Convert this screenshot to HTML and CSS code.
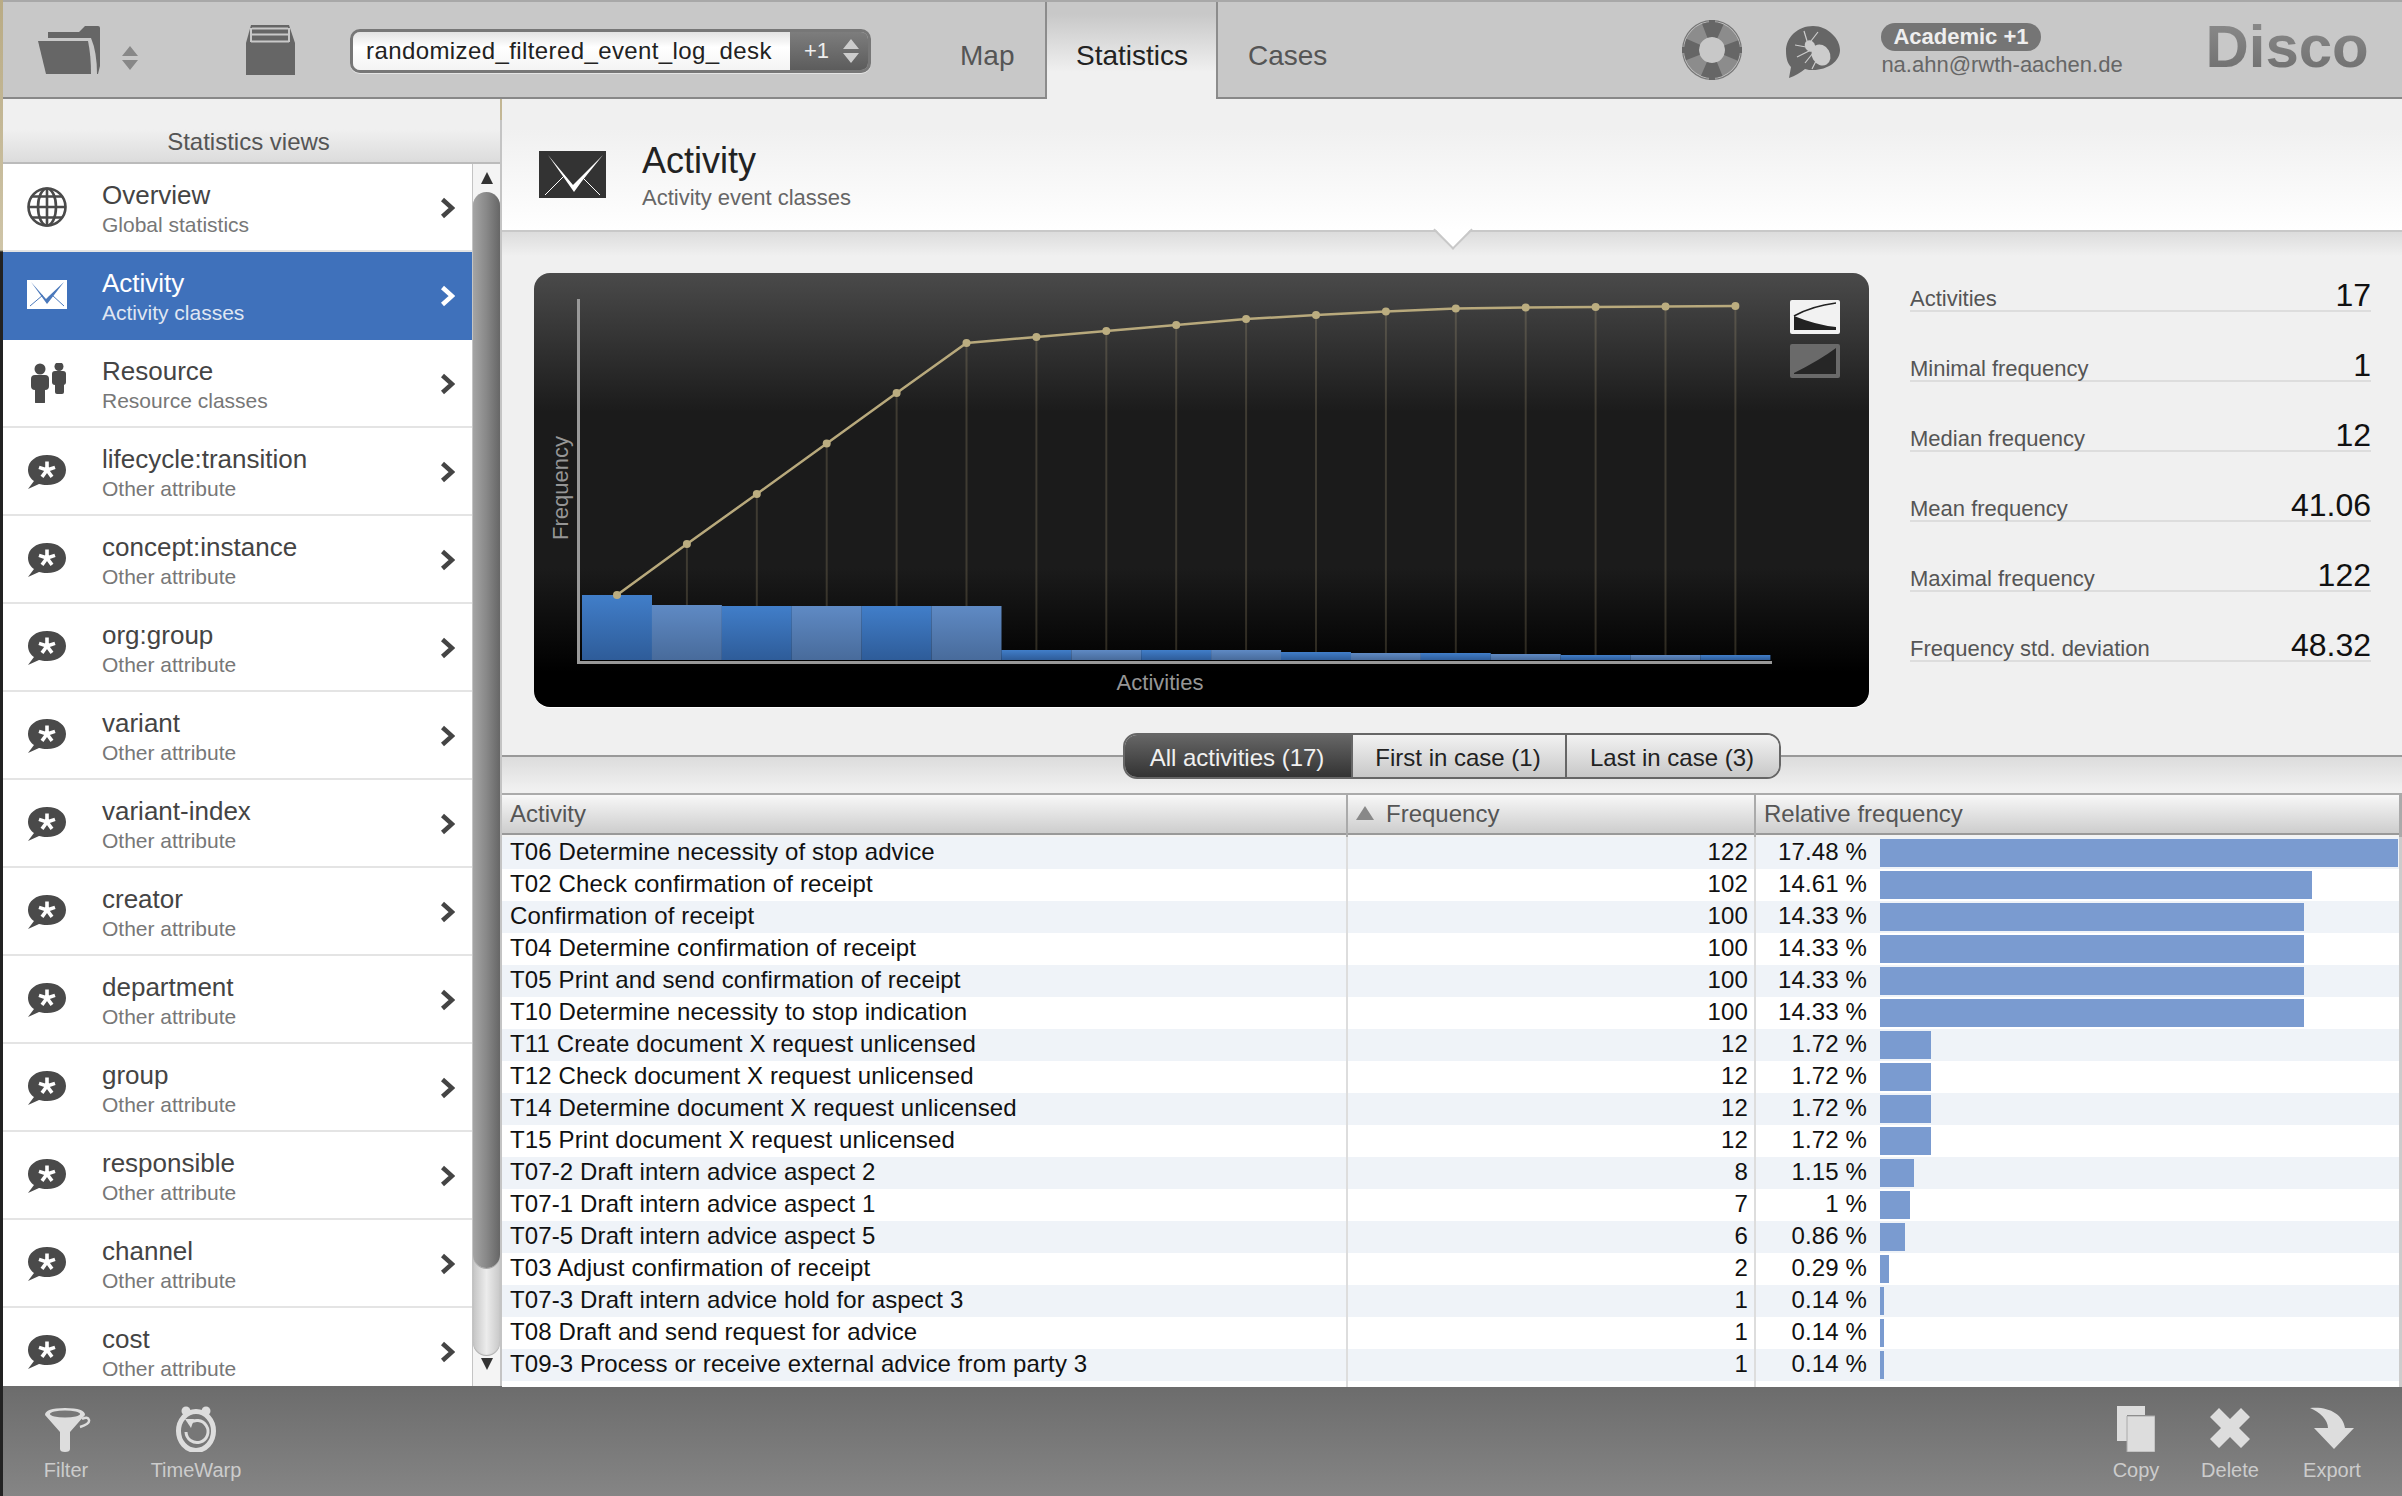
FILE: index.html
```html
<!DOCTYPE html>
<html lang="en">
<head>
  <meta charset="UTF-8" />
  <title>Disco - Statistics</title>
  <link rel="stylesheet" href="styles.css">
</head>
<body>
  <svg class="defs">
    <symbol id="i-attr" viewBox="0 0 40 40">
      <path d="M20 4C9 4 1 10 1 19c0 5 3 9 6 11l-6 8 11-5c2 .5 5 1 8 1 11 0 19-6 19-15S31 4 20 4z" fill="#4a4a4a"/>
      <path d="M20 19V10.500M20 19l8-2.600M20 19l5 6.900M20 19l-5 6.900M20 19l-8-2.600" stroke="#fff" stroke-width="3.600"/>
    </symbol>
    <symbol id="i-chev" viewBox="0 0 15 22">
      <path d="M2.5 2.5L12 11l-9.500 8.500" fill="none" stroke="currentColor" stroke-width="4.500"/>
    </symbol>
  </svg>

  <div class="app">
    <header class="topbar">
      <svg class="ico-folder" width="62" height="48" viewBox="0 0 62 48">
        <path d="M10 6h31l6-6h13q2 0 2 2v38l-2 8h-1q0-22-6-36H10z" fill="#666"/>
        <path d="M0 15h50q3 14 3 33H8z" fill="#666"/>
      </svg>
      <svg class="ico-updown" width="16" height="24" viewBox="0 0 16 24">
        <path d="M8 0l8 10H0zM0 14h16L8 24z" fill="#888"/>
      </svg>
      <svg class="ico-archive" width="50" height="50" viewBox="0 0 50 50">
        <path d="M6 0h38l6 18v32H1V18z" fill="#666"/>
        <path d="M7 3.500h36M6 9.500h38M6 16.500h38M6 3v14M44 3v14" stroke="#c8c8c8" stroke-width="2" fill="none"/>
      </svg>

      <div class="combo">
        <span class="combo-name">randomized_filtered_event_log_desk</span>
        <span class="combo-count">+1
          <svg width="16" height="24" viewBox="0 0 16 24"><path d="M8 0l8 10H0zM0 14h16L8 24z" fill="#ccc"/></svg>
        </span>
      </div>

      <nav class="tabs">
        <a class="tab tab-map">Map</a>
        <a class="tab tab-active">Statistics</a>
        <a class="tab tab-cases">Cases</a>
      </nav>

      <svg class="ico-help" width="60" height="60" viewBox="0 0 60 60">
        <circle cx="30" cy="30" r="29.300" fill="none" stroke="#777" stroke-width="1.200"/>
        <circle cx="30" cy="30" r="20.500" fill="none" stroke="#8c8c8c" stroke-width="15"/>
        <circle cx="30" cy="30" r="20.500" fill="none" stroke="#666" stroke-width="15" stroke-dasharray="16.100 16.100" stroke-dashoffset="8.050"/>
        <path d="M27 0h6v6h-6zM27 54h6v6h-6zM0 27h6v6H0zM54 27h6v6h-6z" fill="#666"/>
      </svg>
      <svg class="ico-bug" width="56" height="54" viewBox="0 0 56 54">
        <path d="M28 1C13 1 1 12 1 26c0 8 2 13 5 16L4 53c6-2 12-6 16-9 3 1 5 1 8 1 15 0 27-9 27-20S43 1 28 1z" fill="#666"/>
        <ellipse cx="36" cy="30" rx="9" ry="11" transform="rotate(-30 36 30)" fill="#ccc"/>
        <ellipse cx="25" cy="21" rx="5" ry="6" transform="rotate(-30 25 21)" fill="#ccc"/>
        <path d="M22 16L19 6M26 16L33 7M21 22L10 20M24 26L12 32M28 28L20 38M31 36L27 44" stroke="#ccc" stroke-width="1.200" fill="none"/>
      </svg>

      <div class="account">
        <span class="badge">Academic +1</span>
        <span class="email">na.ahn@rwth-aachen.de</span>
      </div>
      <div class="logo">Disco</div>
    </header>

    <div class="content">
      <aside class="sidebar">
        <div class="sidebar-head">Statistics views</div>
        <div class="sidebar-body">
          <ul class="views">
            <li class="view">
              <svg class="view-ico" viewBox="0 0 40 40">
                <g fill="none" stroke="#4a4a4a" stroke-width="2.600">
                  <circle cx="20" cy="20" r="18.500"/><ellipse cx="20" cy="20" rx="9" ry="18.500"/>
                  <path d="M20 1.500v37M1.500 20h37M5 9.500h30M5 30.500h30"/>
                </g>
              </svg>
              <div class="view-text"><div class="view-title">Overview</div><div class="view-sub">Global statistics</div></div>
              <svg class="view-chev"><use href="#i-chev"/></svg>
            </li>
            <li class="view view-active">
              <svg class="view-ico" viewBox="0 0 40 40">
                <rect x="0" y="5" width="41" height="29" fill="#fff"/>
                <path d="M4 7L19 24l3-3 15-14-13 17-4 5z" fill="#4a78bb"/>
                <path d="M3 31l13-11M37 31L25 20" stroke="#4a78bb" stroke-width="1"/>
              </svg>
              <div class="view-text"><div class="view-title">Activity</div><div class="view-sub">Activity classes</div></div>
              <svg class="view-chev"><use href="#i-chev"/></svg>
            </li>
            <li class="view">
              <svg class="view-ico" viewBox="0 0 40 40">
                <g fill="#4a4a4a">
                  <circle cx="13" cy="6" r="5.500"/><rect x="4" y="12" width="18" height="15" rx="4"/><rect x="8" y="20" width="10" height="21" rx="2"/>
                  <circle cx="32" cy="3.500" r="4.500"/><rect x="25" y="8" width="14" height="14" rx="3"/><rect x="28" y="18" width="9" height="13" rx="2"/>
                </g>
              </svg>
              <div class="view-text"><div class="view-title">Resource</div><div class="view-sub">Resource classes</div></div>
              <svg class="view-chev"><use href="#i-chev"/></svg>
            </li>
            <li class="view">
              <svg class="view-ico"><use href="#i-attr"/></svg>
              <div class="view-text"><div class="view-title">lifecycle:transition</div><div class="view-sub">Other attribute</div></div>
              <svg class="view-chev"><use href="#i-chev"/></svg>
            </li>
            <li class="view">
              <svg class="view-ico"><use href="#i-attr"/></svg>
              <div class="view-text"><div class="view-title">concept:instance</div><div class="view-sub">Other attribute</div></div>
              <svg class="view-chev"><use href="#i-chev"/></svg>
            </li>
            <li class="view">
              <svg class="view-ico"><use href="#i-attr"/></svg>
              <div class="view-text"><div class="view-title">org:group</div><div class="view-sub">Other attribute</div></div>
              <svg class="view-chev"><use href="#i-chev"/></svg>
            </li>
            <li class="view">
              <svg class="view-ico"><use href="#i-attr"/></svg>
              <div class="view-text"><div class="view-title">variant</div><div class="view-sub">Other attribute</div></div>
              <svg class="view-chev"><use href="#i-chev"/></svg>
            </li>
            <li class="view">
              <svg class="view-ico"><use href="#i-attr"/></svg>
              <div class="view-text"><div class="view-title">variant-index</div><div class="view-sub">Other attribute</div></div>
              <svg class="view-chev"><use href="#i-chev"/></svg>
            </li>
            <li class="view">
              <svg class="view-ico"><use href="#i-attr"/></svg>
              <div class="view-text"><div class="view-title">creator</div><div class="view-sub">Other attribute</div></div>
              <svg class="view-chev"><use href="#i-chev"/></svg>
            </li>
            <li class="view">
              <svg class="view-ico"><use href="#i-attr"/></svg>
              <div class="view-text"><div class="view-title">department</div><div class="view-sub">Other attribute</div></div>
              <svg class="view-chev"><use href="#i-chev"/></svg>
            </li>
            <li class="view">
              <svg class="view-ico"><use href="#i-attr"/></svg>
              <div class="view-text"><div class="view-title">group</div><div class="view-sub">Other attribute</div></div>
              <svg class="view-chev"><use href="#i-chev"/></svg>
            </li>
            <li class="view">
              <svg class="view-ico"><use href="#i-attr"/></svg>
              <div class="view-text"><div class="view-title">responsible</div><div class="view-sub">Other attribute</div></div>
              <svg class="view-chev"><use href="#i-chev"/></svg>
            </li>
            <li class="view">
              <svg class="view-ico"><use href="#i-attr"/></svg>
              <div class="view-text"><div class="view-title">channel</div><div class="view-sub">Other attribute</div></div>
              <svg class="view-chev"><use href="#i-chev"/></svg>
            </li>
            <li class="view">
              <svg class="view-ico"><use href="#i-attr"/></svg>
              <div class="view-text"><div class="view-title">cost</div><div class="view-sub">Other attribute</div></div>
              <svg class="view-chev"><use href="#i-chev"/></svg>
            </li>
          </ul>
          <div class="scrollbar">
            <div class="scroll-btn scroll-up"></div>
            <div class="scroll-track"><div class="scroll-thumb"></div></div>
            <div class="scroll-btn scroll-down"></div>
          </div>
        </div>
      </aside>

      <main class="main">
        <div class="page-head">
          <svg class="page-ico" width="67" height="47" viewBox="0 0 67 47">
            <rect width="67" height="47" fill="#333"/>
            <path d="M9 4l25 30 8-8L64 4 43 30l-8 11z" fill="#fff"/>
            <path d="M6 44l20-20M61 44L43 26" stroke="#fff" stroke-width="1"/>
          </svg>
          <div class="page-text">
            <div class="page-title">Activity</div>
            <div class="page-sub">Activity event classes</div>
          </div>
          <div class="notch"></div>
        </div>

        <div class="panels">
          <div class="chart">
            <svg width="1335" height="434" viewBox="534 273 1335 434">
              <defs>
                <linearGradient id="bar-a" x1="0" y1="0" x2="0" y2="1"><stop offset="0" stop-color="#417ec9"/><stop offset="1" stop-color="#2e5c99"/></linearGradient>
                <linearGradient id="bar-b" x1="0" y1="0" x2="0" y2="1"><stop offset="0" stop-color="#5f8ac4"/><stop offset="1" stop-color="#486b9b"/></linearGradient>
              </defs>
              <g class="drops">
                <path d="M686.900 544V660M756.800 494V660M826.700 443.500V660M896.600 393V660M966.500 343V660M1036.400 337V660M1106.300 331V660M1176.200 325V660M1246.100 319V660M1316 315V660M1385.900 311.600V660M1455.800 308.600V660M1525.700 307.600V660M1595.600 307V660M1665.500 306.600V660M1735.400 306V660"/>
              </g>
              <g>
                <rect x="582" y="595" width="70" height="65" fill="url(#bar-a)"/>
                <rect x="651.900" y="605" width="70" height="55" fill="url(#bar-b)"/>
                <rect x="721.800" y="606" width="70" height="54" fill="url(#bar-a)"/>
                <rect x="791.700" y="606" width="70" height="54" fill="url(#bar-b)"/>
                <rect x="861.600" y="606" width="70" height="54" fill="url(#bar-a)"/>
                <rect x="931.500" y="606" width="70" height="54" fill="url(#bar-b)"/>
                <rect x="1001.400" y="650" width="70" height="10" fill="url(#bar-a)"/>
                <rect x="1071.300" y="650" width="70" height="10" fill="url(#bar-b)"/>
                <rect x="1141.200" y="650" width="70" height="10" fill="url(#bar-a)"/>
                <rect x="1211.100" y="650" width="70" height="10" fill="url(#bar-b)"/>
                <rect x="1281" y="652" width="70" height="8" fill="url(#bar-a)"/>
                <rect x="1350.900" y="653" width="70" height="7" fill="url(#bar-b)"/>
                <rect x="1420.800" y="653" width="70" height="7" fill="url(#bar-a)"/>
                <rect x="1490.700" y="654" width="70" height="6" fill="url(#bar-b)"/>
                <rect x="1560.600" y="655" width="70" height="5" fill="url(#bar-a)"/>
                <rect x="1630.500" y="655" width="70" height="5" fill="url(#bar-b)"/>
                <rect x="1700.400" y="655" width="70" height="5" fill="url(#bar-a)"/>
              </g>
              <path class="axis" d="M578.500 299V662.500H1772"/>
              <polyline class="curve" points="617,595 686.900,544 756.800,494 826.700,443.500 896.600,393 966.500,343 1036.400,337 1106.300,331 1176.200,325 1246.100,319 1316,315 1385.900,311.600 1455.800,308.600 1525.700,307.600 1595.600,307 1665.500,306.600 1735.400,306"/>
              <g class="dots">
                <circle cx="617" cy="595" r="4"/><circle cx="686.900" cy="544" r="4"/><circle cx="756.800" cy="494" r="4"/><circle cx="826.700" cy="443.500" r="4"/><circle cx="896.600" cy="393" r="4"/><circle cx="966.500" cy="343" r="4"/><circle cx="1036.400" cy="337" r="4"/><circle cx="1106.300" cy="331" r="4"/><circle cx="1176.200" cy="325" r="4"/><circle cx="1246.100" cy="319" r="4"/><circle cx="1316" cy="315" r="4"/><circle cx="1385.900" cy="311.600" r="4"/><circle cx="1455.800" cy="308.600" r="4"/><circle cx="1525.700" cy="307.600" r="4"/><circle cx="1595.600" cy="307" r="4"/><circle cx="1665.500" cy="306.600" r="4"/><circle cx="1735.400" cy="306" r="4"/>
              </g>
              <text class="axis-label" x="568" y="488" transform="rotate(-90 568 488)" text-anchor="middle">Frequency</text>
              <text class="axis-label" x="1160" y="690" text-anchor="middle">Activities</text>
              <rect x="1790" y="300" width="50" height="34" rx="2" fill="#f2f2f2"/>
              <path d="M1794 316Q1812 306 1836 303" fill="none" stroke="#222" stroke-width="1.500"/>
              <path d="M1794 316Q1816 325 1836 327V330H1794z" fill="#222"/>
              <rect x="1790" y="344" width="50" height="34" rx="2" fill="#6a6a6a"/>
              <path d="M1794 373Q1820 360 1836 348V374H1794z" fill="#262626"/>
            </svg>
          </div>

          <dl class="stats">
            <div class="stat"><dt>Activities</dt><dd>17</dd></div>
            <div class="stat"><dt>Minimal frequency</dt><dd>1</dd></div>
            <div class="stat"><dt>Median frequency</dt><dd>12</dd></div>
            <div class="stat"><dt>Mean frequency</dt><dd>41.06</dd></div>
            <div class="stat"><dt>Maximal frequency</dt><dd>122</dd></div>
            <div class="stat"><dt>Frequency std. deviation</dt><dd>48.32</dd></div>
          </dl>
        </div>

        <div class="seg-bar">
          <div class="seg">
            <span class="seg-item seg-on">All activities (17)</span>
            <span class="seg-item">First in case (1)</span>
            <span class="seg-item">Last in case (3)</span>
          </div>
        </div>

        <table class="grid">
          <colgroup><col class="col-name"><col class="col-freq"><col></colgroup>
          <thead>
            <tr><th>Activity</th><th><span class="sort"></span>Frequency</th><th class="th-rel">Relative frequency</th></tr>
          </thead>
          <tbody>
            <tr><td>T06 Determine necessity of stop advice</td><td>122</td><td><div class="rel"><span class="pct">17.48 %</span><span class="bar" style="width:518px"></span></div></td></tr>
            <tr><td>T02 Check confirmation of receipt</td><td>102</td><td><div class="rel"><span class="pct">14.61 %</span><span class="bar" style="width:432px"></span></div></td></tr>
            <tr><td>Confirmation of receipt</td><td>100</td><td><div class="rel"><span class="pct">14.33 %</span><span class="bar" style="width:424px"></span></div></td></tr>
            <tr><td>T04 Determine confirmation of receipt</td><td>100</td><td><div class="rel"><span class="pct">14.33 %</span><span class="bar" style="width:424px"></span></div></td></tr>
            <tr><td>T05 Print and send confirmation of receipt</td><td>100</td><td><div class="rel"><span class="pct">14.33 %</span><span class="bar" style="width:424px"></span></div></td></tr>
            <tr><td>T10 Determine necessity to stop indication</td><td>100</td><td><div class="rel"><span class="pct">14.33 %</span><span class="bar" style="width:424px"></span></div></td></tr>
            <tr><td>T11 Create document X request unlicensed</td><td>12</td><td><div class="rel"><span class="pct">1.72 %</span><span class="bar" style="width:51px"></span></div></td></tr>
            <tr><td>T12 Check document X request unlicensed</td><td>12</td><td><div class="rel"><span class="pct">1.72 %</span><span class="bar" style="width:51px"></span></div></td></tr>
            <tr><td>T14 Determine document X request unlicensed</td><td>12</td><td><div class="rel"><span class="pct">1.72 %</span><span class="bar" style="width:51px"></span></div></td></tr>
            <tr><td>T15 Print document X request unlicensed</td><td>12</td><td><div class="rel"><span class="pct">1.72 %</span><span class="bar" style="width:51px"></span></div></td></tr>
            <tr><td>T07-2 Draft intern advice aspect 2</td><td>8</td><td><div class="rel"><span class="pct">1.15 %</span><span class="bar" style="width:34px"></span></div></td></tr>
            <tr><td>T07-1 Draft intern advice aspect 1</td><td>7</td><td><div class="rel"><span class="pct">1 %</span><span class="bar" style="width:30px"></span></div></td></tr>
            <tr><td>T07-5 Draft intern advice aspect 5</td><td>6</td><td><div class="rel"><span class="pct">0.86 %</span><span class="bar" style="width:25px"></span></div></td></tr>
            <tr><td>T03 Adjust confirmation of receipt</td><td>2</td><td><div class="rel"><span class="pct">0.29 %</span><span class="bar" style="width:9px"></span></div></td></tr>
            <tr><td>T07-3 Draft intern advice hold for aspect 3</td><td>1</td><td><div class="rel"><span class="pct">0.14 %</span><span class="bar" style="width:4px"></span></div></td></tr>
            <tr><td>T08 Draft and send request for advice</td><td>1</td><td><div class="rel"><span class="pct">0.14 %</span><span class="bar" style="width:4px"></span></div></td></tr>
            <tr><td>T09-3 Process or receive external advice from party 3</td><td>1</td><td><div class="rel"><span class="pct">0.14 %</span><span class="bar" style="width:4px"></span></div></td></tr>
            <tr class="grid-pad"><td></td><td></td><td></td></tr>
          </tbody>
        </table>
      </main>
    </div>

    <footer class="toolbar">
      <div class="tool tool-filter">
        <svg width="46" height="46" viewBox="0 0 46 46">
          <path d="M0 9Q0 2 20 2T40 9L25 26V43q0 3-5 3t-5-3V26z" fill="#ddd"/>
          <ellipse cx="20" cy="8" rx="15" ry="3.500" fill="#777"/>
          <path d="M37 13q6-3 7 1t-9 7" fill="none" stroke="#ddd" stroke-width="2.500"/>
        </svg>
        <span>Filter</span>
      </div>
      <div class="tool">
        <svg width="46" height="46" viewBox="0 0 46 46">
          <circle cx="13" cy="5" r="4.500" fill="#ddd"/><circle cx="33" cy="5" r="4.500" fill="#ddd"/>
          <ellipse cx="23" cy="25" rx="17.500" ry="19.500" fill="#777" stroke="#ddd" stroke-width="5"/>
          <path d="M16 18a11 11 0 1 1-3 8" fill="none" stroke="#ddd" stroke-width="3"/>
          <path d="M12 13l9 0-3 9z" fill="#ddd"/>
        </svg>
        <span>TimeWarp</span>
      </div>
      <div class="tools-right">
        <div class="tool tool-narrow">
          <svg width="38" height="46" viewBox="0 0 38 46">
            <path d="M0 0h28v9H10v26H0z" fill="#ddd"/>
            <path d="M10 10h28v36H10z" fill="#ddd" stroke="#aaa" stroke-width="1"/>
          </svg>
          <span>Copy</span>
        </div>
        <div class="tool tool-narrow">
          <svg width="40" height="46" viewBox="0 0 40 46">
            <path d="M9 2l11 11L31 2l9 9-11 11 11 11-9 9-11-11L9 42l-9-9 11-11L0 11z" fill="#ddd"/>
          </svg>
          <span>Delete</span>
        </div>
        <div class="tool tool-narrow tool-export">
          <svg width="44" height="46" viewBox="0 0 44 46">
            <path d="M0 2c18-2 33 6 35 20h9L24 43 4 22h14C18 14 10 6 0 2z" fill="#ddd"/>
          </svg>
          <span>Export</span>
        </div>
      </div>
    </footer>
  </div>
</body>
</html>
```

FILE: styles.css
```css
* {
  box-sizing: border-box;
}

html, body {
  margin: 0;
  height: 100%;
}

body {
  width: 2402px;
  height: 1496px;
  overflow: hidden;
  padding-left: 3px;
  font-family: "Liberation Sans", Arial, sans-serif;
  color: #111;
  background: linear-gradient(#b9ab84 0, #cfc5a8 250px, #222 252px);
}

.defs {
  display: none;
}

.app {
  display: flex;
  flex-direction: column;
  height: 1496px;
}

/* top bar */
.topbar {
  display: flex;
  align-items: center;
  flex: none;
  height: 99px;
  background: #c8c8c8;
  border-top: 2px solid #a8a8a8;
  border-bottom: 2px solid #888;
}

.ico-folder {
  margin-left: 35px;
}

.ico-updown {
  margin: 16px 0 0 22px;
}

.ico-archive {
  margin-left: 107px;
}

.combo {
  display: flex;
  width: 521px;
  height: 44px;
  margin: 3px 0 0 55px;
  border: 3px solid #777;
  border-radius: 10px;
  overflow: hidden;
  box-shadow: 0 1px 0 #e4e4e4;
}

.combo-name {
  width: 437px;
  padding-left: 13px;
  font-size: 24px;
  letter-spacing: 0.4px;
  line-height: 37px;
  color: #222;
  background: linear-gradient(#e2e2e2, #fff 40%, #f4f4f4);
}

.combo-count {
  display: flex;
  align-items: center;
  flex: 1;
  gap: 14px;
  padding-left: 14px;
  font-size: 22px;
  color: #eee;
  background: linear-gradient(#7d7d7d, #5c5c5c);
}

.tabs {
  display: flex;
  align-self: stretch;
  margin-left: 47px;
  font-size: 28px;
  line-height: 42px;
  color: #555;
}

.tab {
  padding-top: 33px;
}

.tab-map {
  width: 129px;
  padding-left: 42px;
  border-right: 2px solid #8c8c8c;
}

.tab-active {
  width: 169px;
  margin-bottom: -2px;
  padding-left: 29px;
  color: #222;
  background: linear-gradient(#c8c8c8 12px, #f0f0f0 70px);
}

.tab-cases {
  padding-left: 30px;
  border-left: 2px solid #8c8c8c;
}

.ico-help {
  margin-left: 355px;
}

.ico-bug {
  margin: 4px 0 0 43px;
}

.account {
  display: flex;
  flex-direction: column;
  align-items: flex-start;
  width: 324px;
  margin: 3px 0 0 40px;
}

.badge {
  height: 28px;
  padding: 0 12px;
  border-radius: 14px;
  font-size: 22px;
  font-weight: bold;
  line-height: 28px;
  color: #eee;
  background: #757575;
}

.email {
  font-size: 22px;
  line-height: 28px;
  color: #666;
}

.logo {
  margin-top: -6px;
  font-size: 60px;
  font-weight: bold;
  line-height: 60px;
  color: transparent;
  background: linear-gradient(#8c8c8c, #6e6e6e);
  -webkit-background-clip: text;
  background-clip: text;
}

/* middle */
.content {
  display: flex;
  flex: 1;
  min-height: 0;
}

.sidebar {
  display: flex;
  flex-direction: column;
  flex: none;
  width: 497px;
  background: #fff;
}

.sidebar-head {
  flex: none;
  height: 65px;
  padding: 29px 6px 0 0;
  font-size: 24px;
  line-height: 28px;
  text-align: center;
  color: #555;
  background: linear-gradient(#f0f0f0 30px, #dcdcdc 63px);
  border-bottom: 2px solid #bbb;
}

.sidebar-body {
  display: flex;
  flex: 1;
  min-height: 0;
}

.views {
  flex: none;
  width: 469px;
  margin: 0;
  padding: 0;
  list-style: none;
  overflow: hidden;
}

.view {
  display: flex;
  align-items: center;
  height: 88px;
  padding-left: 24px;
  color: #444;
  border-bottom: 2px solid #e4e4e4;
}

.view-active {
  color: #fff;
  background: #3f71bb;
  border-bottom-color: #3f71bb;
}

.view-ico {
  flex: none;
  width: 40px;
  height: 40px;
}

.view-text {
  flex: 1;
  margin-left: 35px;
  padding-top: 3px;
}

.view-title {
  font-size: 26px;
  line-height: 30px;
}

.view-sub {
  margin-top: 2px;
  font-size: 21px;
  line-height: 26px;
  color: #777;
}

.view-active .view-sub {
  color: #dfe6f2;
}

.view-chev {
  flex: none;
  width: 15px;
  height: 22px;
  margin: 2px 17px 0 0;
}

.scrollbar {
  display: flex;
  flex-direction: column;
  flex: 1;
  border-left: 1px solid #c4c4c4;
  background: #f4f4f4;
}

.scroll-btn {
  flex: none;
  height: 28px;
  display: flex;
  justify-content: center;
}

.scroll-up::after,
.scroll-down::after {
  content: "";
  width: 0;
  height: 0;
  border-left: 6px solid transparent;
  border-right: 6px solid transparent;
}

.scroll-up::after {
  margin-top: 8px;
  border-bottom: 12px solid #333;
}

.scroll-down {
  height: 30px;
}

.scroll-down::after {
  margin-top: 2px;
  border-top: 12px solid #333;
}

.scroll-track {
  flex: 1;
  border-radius: 14px;
  background: linear-gradient(to right, #c4c4c4, #ececec 50%, #c8c8c8);
  box-shadow: inset 0 -1px 1px #aaa;
}

.scroll-thumb {
  height: 1076px;
  border-radius: 14px;
  background: linear-gradient(to right, #a4a4a4, #888 50%, #666);
  box-shadow: 0 1px 0 #aaa;
}

.main {
  position: relative;
  display: flex;
  flex-direction: column;
  flex: 1;
  min-width: 0;
  margin-left: 2px;
  background: #f0f0f0;
}

.main::before {
  content: "";
  position: absolute;
  left: -2px;
  top: 21px;
  bottom: 0;
  width: 2px;
  background: #c4c4c4;
}

.page-head {
  position: relative;
  display: flex;
  align-items: flex-start;
  flex: none;
  height: 133px;
  padding: 52px 0 0 37px;
  background: linear-gradient(#f0f0f0 30px, #fff);
  border-bottom: 2px solid #c8c8c8;
}

.page-ico {
  flex: none;
}

.page-text {
  margin: -12px 0 0 36px;
}

.page-title {
  font-size: 36px;
  line-height: 44px;
  color: #222;
}

.page-sub {
  margin-top: 1px;
  font-size: 22px;
  line-height: 28px;
  color: #666;
}

.notch {
  position: absolute;
  left: 937px;
  bottom: -14px;
  width: 28px;
  height: 28px;
  transform: rotate(45deg);
  background: linear-gradient(135deg, transparent 50%, #fff 50%);
  border-right: 2px solid #c8c8c8;
  border-bottom: 2px solid #c8c8c8;
}

.panels {
  display: flex;
  flex: none;
  gap: 41px;
  height: 501px;
  padding: 41px 31px 0 32px;
  background: linear-gradient(#dcdcdc, #f0f0f0 24px);
}

.chart {
  flex: none;
  width: 1335px;
  height: 434px;
  border-radius: 16px;
  overflow: hidden;
  background: linear-gradient(#4a4a4a 0, #1b1b1b 32%, #1b1b1b 68%, #000 92%);
  box-shadow: 0 1px 0 #fff;
}

.chart svg {
  display: block;
}

.drops {
  fill: none;
  stroke: rgba(190, 175, 130, 0.22);
  stroke-width: 2;
}

.axis {
  fill: none;
  stroke: #999;
  stroke-width: 3;
}

.curve {
  fill: none;
  stroke: #b8a97c;
  stroke-width: 2.500;
}

.dots {
  fill: #bbad80;
}

.axis-label {
  font-size: 22px;
  fill: #969696;
}

.stats {
  display: flex;
  flex-direction: column;
  flex: 1;
  gap: 30px;
  margin: -1px 0 0;
}

.stat {
  display: flex;
  align-items: baseline;
  justify-content: space-between;
  height: 40px;
  padding-top: 7px;
  border-bottom: 2px solid #ddd;
}

.stat dt {
  font-size: 22px;
  color: #555;
}

.stat dd {
  margin: 0;
  font-size: 32px;
  line-height: 32px;
  color: #111;
}

.seg-bar {
  display: flex;
  justify-content: center;
  flex: none;
  height: 60px;
  background: linear-gradient(#f0f0f0 22px, #999 22px, #999 24px, #dcdcdc 24px, #f0f0f0 56px);
}

.seg {
  display: flex;
  height: 46px;
  border: 2px solid #666;
  border-radius: 14px;
  overflow: hidden;
  font-size: 24px;
  line-height: 45px;
}

.seg-item {
  width: 214px;
  padding-right: 2px;
  text-align: center;
  color: #222;
  background: linear-gradient(#f2f2f2, #c8c8c8);
}

.seg-item + .seg-item {
  border-left: 2px solid #666;
}

.seg-on {
  width: 226px;
  color: #f0f0f0;
  background: linear-gradient(#666, #333);
}

.grid {
  flex: 1;
  width: 100%;
  table-layout: fixed;
  border-collapse: collapse;
  background: #fff;
}

.col-name {
  width: 845px;
}

.col-freq {
  width: 408px;
}

.grid th {
  height: 43px;
  padding: 0 0 4px 8px;
  font-size: 24px;
  font-weight: normal;
  text-align: left;
  color: #555;
  background: linear-gradient(#f8f8f8 1px, #f4f4f4 3px, #cdcdcd 38px, #999 38px, #999 40px, #f4f4f4 40px);
  border-top: 2px solid #aaa;
  border-right: 2px solid #aaa;
}

.grid th:last-child {
  border-right: 3px solid #aaa;
}

.th-rel {
  padding-left: 10px;
}

.sort {
  display: inline-block;
  width: 0;
  height: 0;
  margin: 0 12px 2px 0;
  border-left: 9px solid transparent;
  border-right: 9px solid transparent;
  border-bottom: 14px solid #888;
}

.grid td {
  height: 32px;
  padding: 0;
  font-size: 24px;
  letter-spacing: 0.12px;
  line-height: 30px;
  vertical-align: top;
  white-space: nowrap;
  border-right: 2px solid #ddd;
}

.grid td:first-child {
  padding-left: 8px;
}

.grid td:nth-child(2) {
  padding-right: 6px;
  text-align: right;
}

.grid td:last-child {
  border-right: 3px solid #ccc;
}

.grid tbody tr:nth-child(odd) {
  background: #eff3f8;
}

.grid tbody .grid-pad {
  background: #fff;
}

.grid-pad td {
  height: 6px;
}

.rel {
  display: flex;
  align-items: center;
  height: 32px;
}

.pct {
  flex: none;
  align-self: flex-start;
  width: 111px;
  margin-right: 13px;
  text-align: right;
}

.bar {
  height: 28px;
  background: #7a9bd0;
}

/* bottom bar */
.toolbar {
  display: flex;
  flex: none;
  gap: 30px;
  height: 110px;
  padding: 20px 23px 0 13px;
  background: linear-gradient(#6c6c6c, #858585);
}

.tool {
  display: flex;
  flex-direction: column;
  align-items: center;
  width: 100px;
  font-size: 20px;
  line-height: 26px;
  color: #ccc;
}

.tool svg {
  margin-bottom: 5px;
}

.tool-filter svg {
  margin-left: 3px;
}

.tools-right {
  display: flex;
  margin-left: auto;
}

.tool-narrow {
  width: 94px;
}

.tool-export {
  margin-left: 8px;
}
```
